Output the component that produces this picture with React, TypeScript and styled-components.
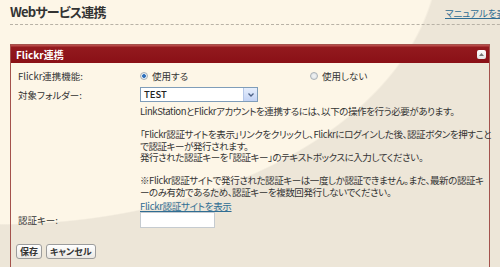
import styled, { createGlobalStyle } from 'styled-components';

const GlobalStyle = createGlobalStyle`
  html, body {
    margin: 0;
    padding: 0;
  }
  body {
    font-family: "Noto Sans CJK JP", sans-serif;
  }
`;

const Page = styled.div`
  width: 500px;
  height: 267px;
  overflow: hidden;
  background: radial-gradient(ellipse 440px 275px at 0px -50px, #fdf6e7 99.5%, #ede6d8 100%);
  font-family: "Noto Sans CJK JP", "Liberation Sans", sans-serif;
  font-feature-settings: "palt";
  font-size: 9.5px;
  color: #333;
`;

const TitleBar = styled.div`
  display: flex;
  align-items: flex-end;
  width: 520px;
  margin-left: 10px;
  padding: 4px 0 4px;
  border-bottom: 1px dashed #b8b2a6;
`;

const Title = styled.h1`
  flex: 0 0 435px;
  margin: 0;
  font-size: 13px;
  line-height: 16px;
  font-weight: bold;
  letter-spacing: -0.8px;
  color: #333;
`;

const Link = styled.a`
  color: #2f6d93;
  text-decoration: underline;
  white-space: nowrap;
  cursor: pointer;
`;

const Panel = styled.section`
  box-sizing: border-box;
  width: 480px;
  height: 230px;
  margin: 19px 0 0 10px;
  border: 1px solid #a4524c;
  border-bottom: none;
`;

const PanelHeader = styled.div`
  display: flex;
  align-items: center;
  justify-content: space-between;
  height: 18px;
  padding: 0 3px 0 5px;
  background: linear-gradient(#b84a48 0, #b84a48 1px, #931a1e 2px, #8a1016 100%);
  color: #fff;
  font-size: 10px;
  font-weight: bold;
`;

const CollapseButton = styled.span`
  display: flex;
  align-items: center;
  justify-content: center;
  width: 9px;
  height: 9px;
  border-radius: 2px;
  background: linear-gradient(#ffffff, #e4e4e4);
`;

const PanelBody = styled.div`
  padding: 6px 0 0 5px;
`;

const FormRow = styled.div<{ $gap?: number; $align?: string }>`
  display: grid;
  grid-template-columns: 124px 1fr;
  align-items: ${(p) => p.$align ?? 'center'};
  margin-top: ${(p) => p.$gap ?? 0}px;
`;

const Label = styled.div<{ $height?: number }>`
  padding-left: 2px;
  line-height: ${(p) => p.$height ?? 14}px;
  white-space: nowrap;
`;

const Options = styled.div`
  display: flex;
  height: 14px;
  align-items: center;
`;

const Option = styled.label<{ $width?: number }>`
  display: inline-flex;
  align-items: center;
  gap: 4px;
  width: ${(p) => (p.$width ? `${p.$width}px` : 'auto')};
`;

const Radio = styled.span<{ $checked?: boolean }>`
  box-sizing: border-box;
  width: 8px;
  height: 8px;
  border-radius: 50%;
  border: 1px solid #a9b0b6;
  background: ${(p) =>
    p.$checked
      ? 'radial-gradient(circle, #2a63a8 0, #3b7bc4 1.6px, #e8eef2 2.2px, #dfe4e8 100%)'
      : 'radial-gradient(circle, #f2f4f5 0, #d9dde0 100%)'};
`;

const Select = styled.div`
  box-sizing: border-box;
  display: flex;
  width: 118px;
  height: 15px;
  border: 1px solid #7f9db9;
  background: #fff;
`;

const SelectValue = styled.span`
  flex: 1;
  padding-left: 3px;
  line-height: 13px;
  font-size: 9.5px;
  font-weight: 500;
  color: #222;
`;

const SelectArrow = styled.span`
  display: flex;
  align-items: center;
  justify-content: center;
  width: 13px;
  background: linear-gradient(#e6eefc, #c3d3f5);
  border-left: 1px solid #b5c7e8;
`;

const Description = styled.div`
  margin-top: 4px;
  margin-left: 124px;
  line-height: 11.5px;
  letter-spacing: -0.4px;
  white-space: nowrap;
`;

const Paragraph = styled.p`
  margin: 0 0 11.5px;

  &:last-child {
    margin-bottom: 0;
  }
`;

const KeyField = styled.div`
  display: flex;
  flex-direction: column;
  align-items: flex-start;
  margin-top: 3px;
  line-height: 11px;
  letter-spacing: -0.3px;
`;

const TextInput = styled.input`
  box-sizing: border-box;
  width: 75px;
  height: 16px;
  margin: 0;
  border: 1px solid #c5cbd0;
  background: #fff;
`;

const Buttons = styled.div`
  display: flex;
  gap: 4px;
  margin-top: 16px;
`;

const Button = styled.button`
  box-sizing: border-box;
  height: 15px;
  padding: 0 3px;
  border: 1px solid #9c9c9c;
  border-radius: 3px;
  background: linear-gradient(#ffffff, #ebe8e3);
  font-family: inherit;
  font-feature-settings: "palt";
  font-size: 9px;
  font-weight: bold;
  line-height: 13px;
  color: #333;
`;

export default function App() {
  return (
    <Page>
      <GlobalStyle />
      <TitleBar>
        <Title>Webサービス連携</Title>
        <Link>マニュアルを表示</Link>
      </TitleBar>
      <Panel>
        <PanelHeader>
          Flickr連携
          <CollapseButton>
            <svg width="5" height="3" viewBox="0 0 5 3">
              <path d="M0 3 L2.5 0 L5 3 Z" fill="#777" />
            </svg>
          </CollapseButton>
        </PanelHeader>
        <PanelBody>
          <FormRow>
            <Label>Flickr連携機能:</Label>
            <Options>
              <Option $width={170}>
                <Radio $checked />
                使用する
              </Option>
              <Option>
                <Radio />
                使用しない
              </Option>
            </Options>
          </FormRow>
          <FormRow $gap={4}>
            <Label>対象フォルダー:</Label>
            <Select>
              <SelectValue>TEST</SelectValue>
              <SelectArrow>
                <svg width="6" height="4" viewBox="0 0 6 4">
                  <path d="M0.5 0.5 L3 3 L5.5 0.5" stroke="#4d6185" strokeWidth="1.3" fill="none" />
                </svg>
              </SelectArrow>
            </Select>
          </FormRow>
          <Description>
            <Paragraph>LinkStationとFlickrアカウントを連携するには、以下の操作を行う必要があります。</Paragraph>
            <Paragraph>
              「Flickr認証サイトを表示」リンクをクリックし、Flickrにログインした後、認証ボタンを押すこと
              <br />
              で認証キーが発行されます。
              <br />
              発行された認証キーを「認証キー」のテキストボックスに入力してください。
            </Paragraph>
            <Paragraph>
              ※Flickr認証サイトで発行された認証キーは一度しか認証できません。また、最新の認証キ
              <br />
              ーのみ有効であるため、認証キーを複数回発行しないでください。
            </Paragraph>
          </Description>
          <FormRow $align="end">
            <Label $height={16}>認証キー:</Label>
            <KeyField>
              <Link>Flickr認証サイトを表示</Link>
              <TextInput type="text" />
            </KeyField>
          </FormRow>
          <Buttons>
            <Button>保存</Button>
            <Button>キャンセル</Button>
          </Buttons>
        </PanelBody>
      </Panel>
    </Page>
  );
}
